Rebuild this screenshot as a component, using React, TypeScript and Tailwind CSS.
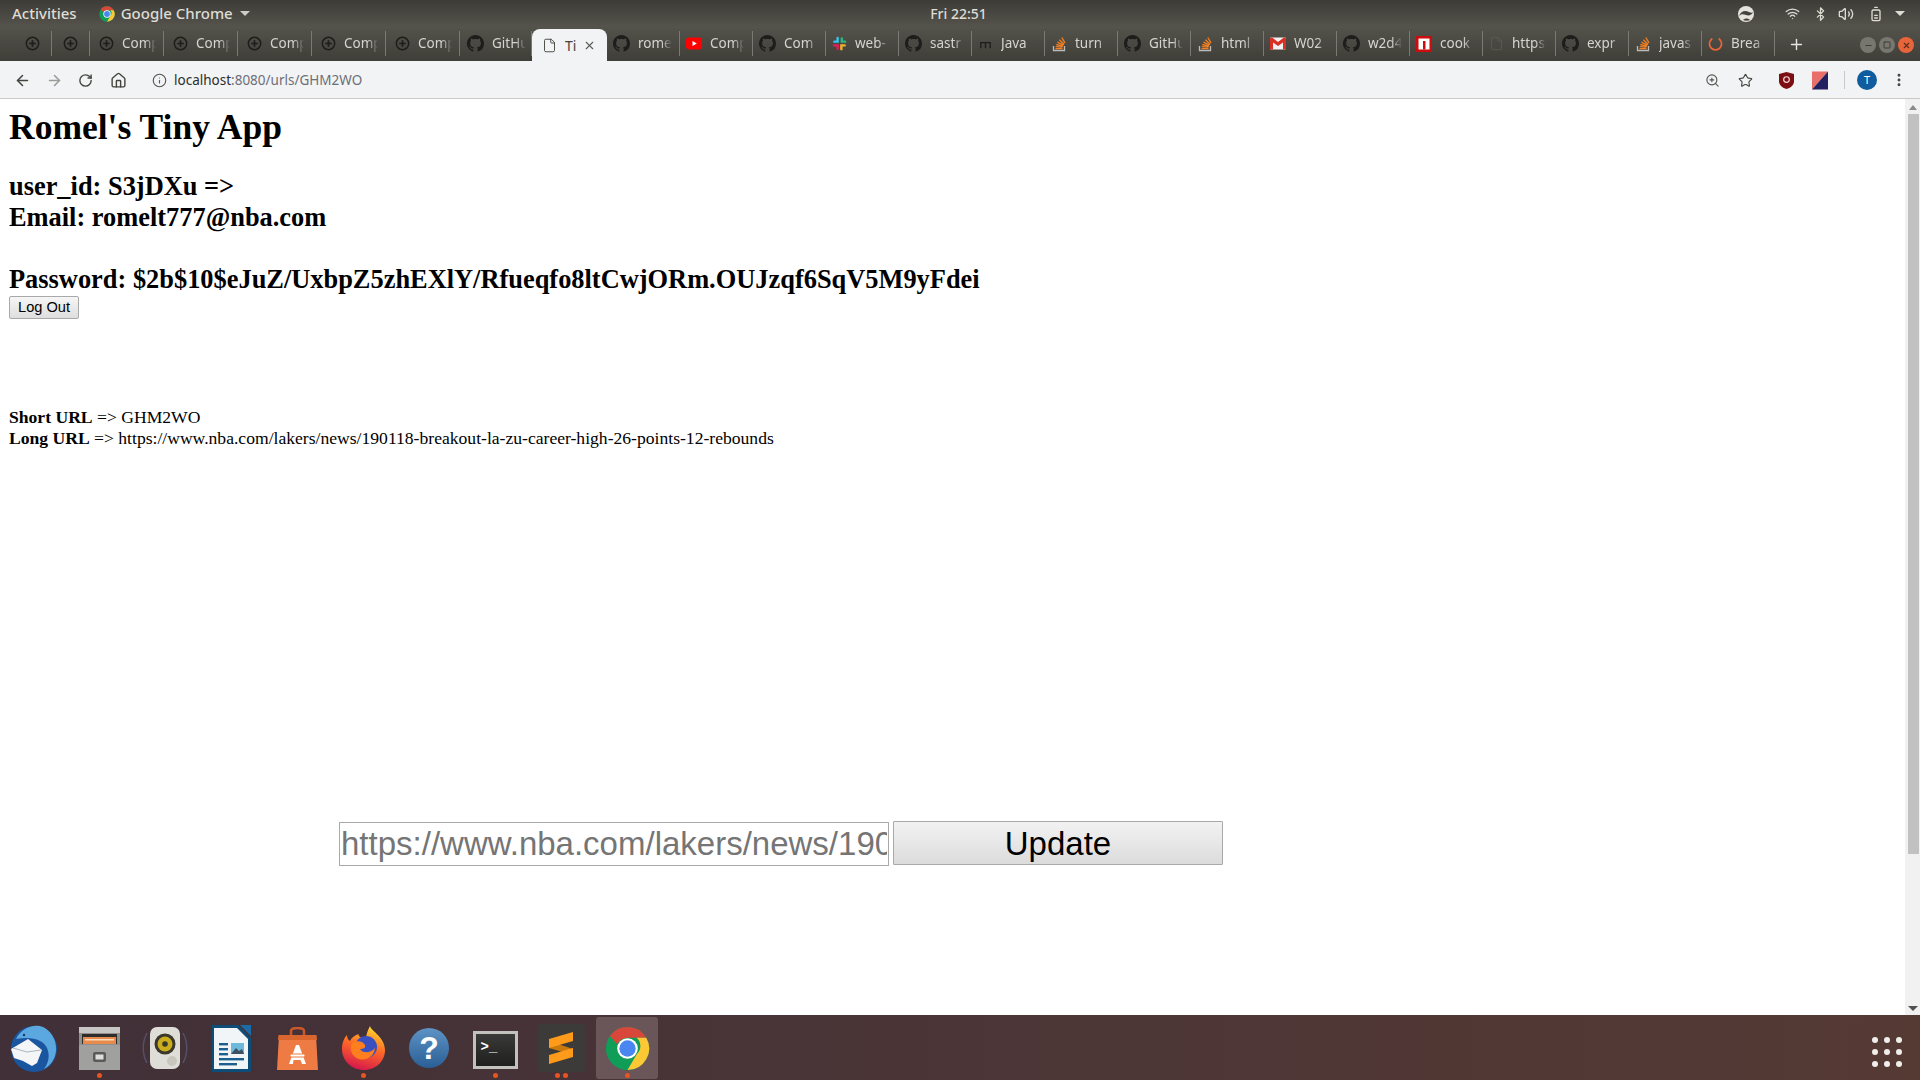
import { Plus, X, Minus, Square, ArrowLeft, ArrowRight, RotateCw, Home, Info, ZoomIn, Star, MoreVertical, Wifi, Bluetooth, Volume2, BatteryMedium, File } from "lucide-react";

const ubuntu = "font-['Noto_Sans',sans-serif]";

function GitHubIcon() {
  return (
    <svg viewBox="0 0 16 16" className="h-[17px] w-[17px] shrink-0" fill="#1d1d1b">
      <path d="M8 0C3.58 0 0 3.58 0 8c0 3.54 2.29 6.53 5.47 7.59.4.07.55-.17.55-.38 0-.19-.01-.82-.01-1.49-2.01.37-2.53-.49-2.69-.94-.09-.23-.48-.94-.82-1.13-.28-.15-.68-.52-.01-.53.63-.01 1.08.58 1.23.82.72 1.21 1.87.87 2.33.66.07-.52.28-.87.51-1.07-1.78-.2-3.64-.89-3.64-3.95 0-.87.31-1.59.82-2.15-.08-.2-.36-1.02.08-2.12 0 0 .67-.21 2.2.82.64-.18 1.32-.27 2-.27s1.36.09 2 .27c1.53-1.04 2.2-.82 2.2-.82.44 1.1.16 1.92.08 2.12.51.56.82 1.27.82 2.15 0 3.07-1.87 3.75-3.65 3.95.29.25.54.73.54 1.48 0 1.07-.01 1.93-.01 2.2 0 .21.15.46.55.38A8.01 8.01 0 0 0 16 8c0-4.42-3.58-8-8-8z" />
    </svg>
  );
}

function PlusCircleIcon() {
  return (
    <svg viewBox="0 0 16 16" className="h-[15px] w-[15px] shrink-0" fill="none" stroke="#1d1d1b" strokeWidth="1.6">
      <circle cx="8" cy="8" r="6.6" />
      <path d="M8 4.5v7M4.5 8h7" strokeWidth="1.8" />
    </svg>
  );
}

function StackIcon() {
  return (
    <svg viewBox="0 0 16 16" className="h-[16px] w-[16px] shrink-0" fill="none">
      <path d="M2.5 10v4.5h11V10" stroke="#bcbbbb" strokeWidth="1.3" />
      <path d="M4.5 12.7h7M4.7 10.6l6.8.6M5.3 8.5l6.6 1.7M6.5 6.2l6 3M8.4 3.8l4.8 4.4M10.8 1.5l3.2 5.4" stroke="#f48024" strokeWidth="1.3" />
    </svg>
  );
}

function YouTubeIcon() {
  return (
    <svg viewBox="0 0 16 12" className="h-[13px] w-[16px] shrink-0">
      <rect width="16" height="12" rx="3" fill="#ff0000" />
      <path d="M6.5 3.5 10.8 6l-4.3 2.5z" fill="#fff" />
    </svg>
  );
}

function SlackIcon() {
  return (
    <svg viewBox="0 0 16 16" className="h-[15px] w-[15px] shrink-0" fill="none" strokeWidth="2.6" strokeLinecap="round">
      <path d="M6 2v4H2.5" stroke="#36c5f0" />
      <path d="M14 6h-3.5V2.5" stroke="#2eb67d" />
      <path d="M10 14v-4h3.5" stroke="#ecb22e" />
      <path d="M2 10h4v3.5" stroke="#e01e5a" />
    </svg>
  );
}

function MediumIcon() {
  return (
    <svg viewBox="0 0 16 16" className="h-[15px] w-[15px] shrink-0" fill="none" stroke="#1d1d1b" strokeWidth="1.4">
      <path d="M3 13V7h10v6M8 7v6" />
    </svg>
  );
}

function GmailIcon() {
  return (
    <svg viewBox="0 0 16 12" className="h-[13px] w-[16px] shrink-0">
      <rect width="16" height="12" rx="1" fill="#f2f2f2" />
      <path d="M0 1.5V12h3V5l5 3.6L13 5v7h3V1.5C16 .2 14.6-.4 13.6.3L8 4.4 2.4.3C1.4-.4 0 .2 0 1.5z" fill="#d93025" />
    </svg>
  );
}

function NpmIcon() {
  return (
    <svg viewBox="0 0 16 16" className="h-[16px] w-[16px] shrink-0">
      <rect width="16" height="16" fill="#cb0d0d" />
      <rect x="2.5" y="2.5" width="11" height="11" fill="#fff" />
      <rect x="7" y="5" width="2.5" height="8.5" fill="#cb0d0d" />
    </svg>
  );
}

function SpinnerIcon() {
  return (
    <svg viewBox="0 0 16 16" className="h-[15px] w-[15px] shrink-0" fill="none" stroke="#e8683a" strokeWidth="1.8" strokeLinecap="round">
      <path d="M4 3.2a6.5 6.5 0 1 0 8 0" />
    </svg>
  );
}

function BlankPageIcon() {
  return <File className="h-[15px] w-[15px] shrink-0 text-[#5e5d58]" strokeWidth={1.3} />;
}

const tabs = [
  { width: "w-[38px]", pad: "pl-[11px]", icon: <PlusCircleIcon />, label: "" },
  { width: "w-[38px]", pad: "pl-[11px]", icon: <PlusCircleIcon />, label: "" },
  { width: "w-[74px]", pad: "pl-[9px]", icon: <PlusCircleIcon />, label: "Comp" },
  { width: "w-[74px]", pad: "pl-[9px]", icon: <PlusCircleIcon />, label: "Comp" },
  { width: "w-[74px]", pad: "pl-[9px]", icon: <PlusCircleIcon />, label: "Comp" },
  { width: "w-[74px]", pad: "pl-[9px]", icon: <PlusCircleIcon />, label: "Comp" },
  { width: "w-[74px]", pad: "pl-[9px]", icon: <PlusCircleIcon />, label: "Comp" },
  { width: "w-[72px]", pad: "pl-[7px]", icon: <GitHubIcon />, label: "GitHu" },
];

const tabsAfter = [
  { icon: <GitHubIcon />, label: "rome" },
  { icon: <YouTubeIcon />, label: "Comp" },
  { icon: <GitHubIcon />, label: "Com" },
  { icon: <SlackIcon />, label: "web-" },
  { icon: <GitHubIcon />, label: "sastr" },
  { icon: <MediumIcon />, label: "Java" },
  { icon: <StackIcon />, label: "turn" },
  { icon: <GitHubIcon />, label: "GitHu" },
  { icon: <StackIcon />, label: "html" },
  { icon: <GmailIcon />, label: "W02" },
  { icon: <GitHubIcon />, label: "w2d4" },
  { icon: <NpmIcon />, label: "cook" },
  { icon: <BlankPageIcon />, label: "https" },
  { icon: <GitHubIcon />, label: "expr" },
  { icon: <StackIcon />, label: "javas" },
  { icon: <SpinnerIcon />, label: "Brea" },
];

function ChromeLogo({ size }: { size: string }) {
  return (
    <svg viewBox="0 0 48 48" className={size}>
      <circle cx="24" cy="24" r="23" fill="#0f9d58" />
      <path d="M24 1a23 23 0 0 1 20 11.5H24a11.5 11.5 0 0 0-10.6 7.2L5.2 10.7A23 23 0 0 1 24 1z" fill="#d9463a" />
      <path d="M44 12.5A23 23 0 0 1 24 47l10-17.2a11.5 11.5 0 0 0-.3-17.3z" fill="#fcc934" />
      <circle cx="24" cy="24" r="11" fill="#fff" />
      <circle cx="24" cy="24" r="8.7" fill="#4a86f0" />
    </svg>
  );
}

function TabItem({ width, pad = "pl-[6px]", icon, label }: { width: string; pad?: string; icon: React.ReactNode; label: string }) {
  return (
    <div className={`flex h-[25px] ${width} ${pad} items-center gap-[8px] overflow-hidden border-r border-[#7a7973]`}>
      {icon}
      {label && (
        <span className="w-[36px] overflow-hidden whitespace-nowrap text-[13.5px] text-[#d5d4ce] [mask-image:linear-gradient(to_right,black_65%,transparent_95%)]">
          {label}
        </span>
      )}
    </div>
  );
}

function DockItem({ children, dots = 0, active = false }: { children: React.ReactNode; dots?: number; active?: boolean }) {
  return (
    <div className="relative flex h-[62px] w-[66px] items-center justify-center">
      {active && <span className="absolute inset-y-0 left-[2px] right-[2px] rounded-[3px] bg-[#6a5558]" />}
      <div className="relative flex items-center justify-center">{children}</div>
      {dots > 0 && (
        <div className="absolute bottom-[1px] left-0 right-0 flex justify-center gap-[3px]">
          {Array.from({ length: dots }).map((_, i) => (
            <span key={i} className="h-[5px] w-[5px] rounded-full bg-[#e9541f]" />
          ))}
        </div>
      )}
    </div>
  );
}

function Dock() {
  return (
    <div className="flex h-[65px] items-end bg-gradient-to-r from-[#413038] to-[#553a34] pb-[1px]">
      {/* Thunderbird */}
      <DockItem>
        <svg viewBox="0 0 48 48" className="h-[48px] w-[48px]">
          <circle cx="25" cy="25" r="23" fill="#1a55a0" />
          <path d="M7 15C12 4 25-1 34 3c8 4 14 13 13 24-1 9-6 15-12 18 5-7 6-14 3-21-4-8-14-12-31-9z" fill="#5ba7df" />
          <circle cx="15" cy="11" r="1.2" fill="#123a6e" />
          <path d="M2 25 19 15l14 11-5 13-5 3-9-5-9-3z" fill="#f3f5f6" />
          <path d="M4 24l14 4 14-2" fill="none" stroke="#a9b6c1" strokeWidth="1" />
        </svg>
      </DockItem>
      {/* Files */}
      <DockItem dots={1}>
        <svg viewBox="0 0 41 43" className="h-[43px] w-[41px]">
          <rect width="41" height="43" rx="2" fill="#8f8f8d" />
          <rect width="41" height="6" fill="#c7c6c4" />
          <rect x="3" y="7" width="35" height="10" fill="#2f2d2b" />
          <rect x="4" y="10" width="33" height="7" fill="#e78b4c" />
          <rect x="6" y="12" width="29" height="1.5" fill="#f9dcbd" />
          <rect y="18" width="41" height="25" fill="#a0a09e" />
          <rect x="14" y="25" width="13" height="10" rx="2" fill="#5a5a58" />
          <rect x="16.5" y="27.5" width="8" height="5" fill="#dedede" />
        </svg>
      </DockItem>
      {/* Rhythmbox */}
      <DockItem>
        <svg viewBox="0 0 48 42" className="h-[42px] w-[48px]">
          <path d="M6 6C1 15 1 27 6 36M42 6c5 9 5 21 0 30" fill="none" stroke="#55506a" strokeWidth="1.5" />
          <rect x="9" y="0" width="30" height="42" rx="7" fill="#dfddd7" />
          <circle cx="24" cy="17" r="10.5" fill="#3a372c" />
          <circle cx="24" cy="17" r="7.5" fill="#c9ad1d" />
          <circle cx="24" cy="17" r="2.8" fill="#3a372c" />
          <circle cx="31" cy="34" r="5" fill="#c8c6bf" />
        </svg>
      </DockItem>
      {/* LibreOffice Writer */}
      <DockItem>
        <svg viewBox="0 0 40 47" className="h-[47px] w-[40px]">
          <path d="M1 0h26l13 13v32a2 2 0 0 1-2 2H1z" fill="#0d4d78" />
          <path d="M3 3h23l11 11v30H3z" fill="#f1f5f7" />
          <path d="M29 0h11v11z" fill="#1a6ca8" />
          <rect x="8" y="18" width="9" height="2.4" fill="#1a5f8f" />
          <rect x="8" y="23" width="9" height="2.4" fill="#1a5f8f" />
          <rect x="8" y="28" width="9" height="2.4" fill="#1a5f8f" />
          <rect x="20" y="18" width="13" height="11" fill="#6db9dc" />
          <path d="m20 29 5-6 3 3 3-2 2 5z" fill="#3f5060" />
          <rect x="8" y="33" width="25" height="2.4" fill="#1a5f8f" />
          <rect x="8" y="38" width="18" height="2.4" fill="#1a5f8f" />
        </svg>
      </DockItem>
      {/* Ubuntu Software */}
      <DockItem>
        <svg viewBox="0 0 41 43" className="h-[43px] w-[41px]">
          <path d="M14 11V4c0-4 13-4 13 0v7" fill="none" stroke="#c9592a" strokeWidth="2.5" />
          <path d="M2 8h37l2 35H0z" fill="#ee7b43" />
          <path d="M1.5 8h38l.5 5H1z" fill="#d9652f" />
          <path d="M12 37 19 18h3l7 19h-4l-1.5-4h-7L16 37z" fill="#fff" />
          <rect x="13" y="27" width="15" height="3" rx="1.5" fill="#fff" stroke="#ee7b43" />
        </svg>
      </DockItem>
      {/* Firefox */}
      <DockItem dots={1}>
        <svg viewBox="0 0 43 44" className="h-[44px] w-[43px]">
          <defs>
            <linearGradient id="ffx" x1="0.6" y1="0" x2="0.3" y2="1">
              <stop offset="0" stopColor="#ffd42f" />
              <stop offset="0.45" stopColor="#ff6a25" />
              <stop offset="1" stopColor="#d3134f" />
            </linearGradient>
          </defs>
          <path d="M28 0c1 5 15 11 15 24 0 11-9 20-21 20C10 44 0 35 0 23 0 17 2 12 5 9c0 3 1 5 3 6 2-4 5-6 9-7-2 2 3 4 7 5 0-5 2-9 4-13z" fill="url(#ffx)" />
          <circle cx="24" cy="21" r="11" fill="#3a4fc0" />
          <path d="M10 17c5-3 11-2 13 2 1 3-2 4-5 4 2 4 10 5 15-1-1 9-9 13-16 11-7-2-10-10-7-16z" fill="#ff7f1e" />
        </svg>
      </DockItem>
      {/* Help */}
      <DockItem>
        <div className="flex h-[40px] w-[40px] items-center justify-center rounded-full bg-gradient-to-b from-[#5e93c5] to-[#2a5f96] font-['Liberation_Sans',sans-serif] text-[32px] font-bold leading-none text-white">
          ?
        </div>
      </DockItem>
      {/* Terminal */}
      <DockItem dots={1}>
        <div className="mt-[3px] h-[38px] w-[45px] border-[3px] border-[#c2c1bc] bg-gradient-to-b from-[#3a3a38] to-[#1f1f1e] pl-[5px] pt-[6px] font-['Liberation_Mono',monospace] text-[14px] font-bold leading-none text-white">
          &gt;_
        </div>
      </DockItem>
      {/* Sublime */}
      <DockItem dots={2}>
        <div className="flex h-[48px] w-[48px] items-center justify-center rounded-[4px] bg-[#3c3b39]">
          <svg viewBox="0 0 24 32" className="h-[32px] w-[24px]">
            <path d="M0 9l24 8v6L0 16z" fill="#c97a0c" />
            <path d="M24 0v9L0 16V7z" fill="#ff9a1a" />
            <path d="M24 16v9L0 32v-9z" fill="#ff9a1a" />
          </svg>
        </div>
      </DockItem>
      {/* Chrome, running */}
      <DockItem dots={1} active>
        <ChromeLogo size="h-[45px] w-[45px]" />
      </DockItem>
      <div className="mb-[12px] ml-auto mr-[18px] grid grid-cols-3 gap-[6px]">
        {[0, 1, 2, 3, 4, 5, 6, 7, 8].map((i) => (
          <span key={i} className="h-[6px] w-[6px] rounded-full bg-[#f0efec]" />
        ))}
      </div>
    </div>
  );
}

export default function App() {
  return (
    <div className="flex h-screen w-full flex-col overflow-hidden bg-white">
      {/* GNOME TOP BAR */}
      <div className={`flex h-[27px] items-center justify-between bg-gradient-to-b from-[#3d3c37] to-[#55534c] pl-[12px] pr-[15px] text-[15px] font-medium text-[#dfdcd4] ${ubuntu}`}>
        <div className="flex flex-1 items-center">
          <span>Activities</span>
          <span className="ml-[22px] mr-[6px]">
            <ChromeLogo size="h-[16px] w-[16px]" />
          </span>
          <span>Google Chrome</span>
          <span className="ml-[7px] h-0 w-0 border-x-[5px] border-t-[5px] border-x-transparent border-t-[#cfccc4]" />
        </div>
        <span className="text-[14px]">Fri 22:51</span>
        <div className="flex flex-1 items-center justify-end">
          <svg viewBox="0 0 16 16" className="mr-[31px] h-[16px] w-[16px]" fill="#e6e3dc">
            <circle cx="8" cy="8" r="8" />
            <path d="M1 10C3 5 7 4 11 6c2 1 3 1 4 0-1 3-4 4-7 3-3-1-5-1-7 1z" fill="#44433e" />
            <path d="M5 14c2-2 5-2 7 0-2 1-5 1-7 0z" fill="#44433e" />
          </svg>
          <Wifi className="mr-[13px] h-[15px] w-[15px]" />
          <Bluetooth className="mr-[10px] h-[16px] w-[15px]" />
          <Volume2 className="mr-[14px] h-[16px] w-[16px]" />
          <BatteryMedium className="mr-[11px] h-[16px] w-[16px] -rotate-90" />
          <span className="h-0 w-0 border-x-[5px] border-t-[5px] border-x-transparent border-t-[#dfdcd4]" />
        </div>
      </div>

      {/* TAB STRIP */}
      <div className={`flex h-[34px] items-end bg-gradient-to-b from-[#53524b] to-[#3f3e38] pl-[14px] ${ubuntu}`}>
        <div className="mb-[5px] flex items-center">
          {tabs.map((tab, i) => (
            <TabItem key={i} {...tab} />
          ))}
        </div>
        <div className="flex h-[32px] w-[75px] items-center rounded-t-[8px] bg-[#f2f3f5] pl-[10px] text-[14px] text-[#45443f]">
          <File className="h-[15px] w-[15px] shrink-0" strokeWidth={1.5} />
          <span className="ml-[8px]">Ti</span>
          <X className="ml-[7px] h-[13px] w-[13px] text-[#5b5a55]" strokeWidth={2} />
        </div>
        <div className="mb-[5px] flex items-center">
          {tabsAfter.map((tab, i) => (
            <TabItem key={i} width="w-[73px]" icon={tab.icon} label={tab.label} />
          ))}
        </div>
        <Plus className="mb-[8px] ml-[13px] h-[17px] w-[17px] text-[#e6e5e0]" strokeWidth={2} />
        <div className="mb-[8px] ml-auto mr-[6px] flex items-center gap-[3px]">
          <span className="flex h-[16px] w-[16px] items-center justify-center rounded-full bg-[#77766f]">
            <Minus className="h-[9px] w-[9px] text-[#3f3e38]" strokeWidth={3} />
          </span>
          <span className="flex h-[16px] w-[16px] items-center justify-center rounded-full bg-[#77766f]">
            <Square className="h-[8px] w-[8px] text-[#3f3e38]" strokeWidth={3} />
          </span>
          <span className="flex h-[16px] w-[16px] items-center justify-center rounded-full bg-[#e8643a]">
            <X className="h-[9px] w-[9px] text-[#56301f]" strokeWidth={3} />
          </span>
        </div>
      </div>

      {/* TOOLBAR */}
      <div className={`flex h-[38px] items-center border-b border-[#c9c9c9] bg-[#f2f3f5] pl-[14px] pr-[13px] pt-[1px] ${ubuntu}`}>
        <ArrowLeft className="h-[17px] w-[17px] text-[#45443f]" strokeWidth={2.2} />
        <ArrowRight className="ml-[15px] h-[17px] w-[17px] text-[#9b9b98]" strokeWidth={2.2} />
        <RotateCw className="ml-[15px] h-[15px] w-[15px] text-[#45443f]" strokeWidth={2.2} />
        <Home className="ml-[17px] h-[17px] w-[17px] text-[#45443f]" strokeWidth={2} />
        <div className="ml-[15px] flex h-[30px] flex-1 items-center rounded-full bg-[#f2f3f5] pl-[10px] pr-[5px]">
          <Info className="h-[15px] w-[15px] text-[#55544f]" strokeWidth={1.8} />
          <span className="ml-[7px] text-[13.5px] text-[#2e2d2a]">
            localhost<span className="text-[#6c6f78]">:8080/urls/GHM2WO</span>
          </span>
          <ZoomIn className="ml-auto h-[15px] w-[15px] text-[#55544f]" strokeWidth={1.8} />
          <Star className="ml-[18px] mr-[8px] h-[15px] w-[15px] text-[#45443f]" strokeWidth={1.8} />
        </div>
        {/* extensions */}
        <svg viewBox="0 0 16 18" className="ml-[13px] h-[17px] w-[15px]">
          <path d="M8 0 16 2v8c0 4-4 7-8 8-4-1-8-4-8-8V2z" fill="#7d0f12" />
          <circle cx="8" cy="8" r="3" fill="none" stroke="#f3d9d9" strokeWidth="1.3" />
        </svg>
        <svg viewBox="0 0 16 18" className="ml-[18px] h-[19px] w-[16px]">
          <path d="M0 0h16L0 18z" fill="#e96f6a" />
          <path d="M16 0v18H0z" fill="#22205f" />
        </svg>
        <span className="ml-[16px] h-[18px] w-px bg-[#c9c9c9]" />
        <span className="ml-[12px] flex h-[20px] w-[20px] items-center justify-center rounded-full bg-[#0f5c9e] text-[11px] text-white">T</span>
        <MoreVertical className="ml-[14px] h-[16px] w-[16px] text-[#45443f]" strokeWidth={2.4} />
      </div>

      {/* PAGE + SCROLLBAR */}
      <div className="flex min-h-0 flex-1">
        <main className="flex-1 pl-[9px] font-['Liberation_Serif',serif] text-black">
          <h1 className="mt-[8px] text-[35.5px] font-bold leading-[40px]">Romel's Tiny App</h1>
          <h2 className="mt-[24px] text-[26.4px] font-bold leading-[31px]">
            user_id: S3jDXu =&gt;
            <br />
            Email: romelt777@nba.com
            <br />
            <br />
            Password: $2b$10$eJuZ/UxbpZ5zhEXlY/Rfueqfo8ltCwjORm.OUJzqf6SqV5M9yFdei
          </h2>
          <button className="mt-[1px] block h-[23px] w-[70px] rounded-[2px] border border-[#a9a9a9] bg-gradient-to-b from-[#f6f6f6] to-[#dedede] font-['Liberation_Sans',sans-serif] text-[14.6px] leading-none text-black">
            Log Out
          </button>
          <p className="mt-[88px] text-[17.6px] leading-[21px]">
            <b>Short URL</b> =&gt; GHM2WO
            <br />
            <b>Long URL</b> =&gt; https://www.nba.com/lakers/news/190118-breakout-la-zu-career-high-26-points-12-rebounds
          </p>
          <form className="ml-[330px] mt-[372px] flex items-start gap-[4px]" onSubmit={(e) => e.preventDefault()}>
            <input
              readOnly
              defaultValue=""
              placeholder="https://www.nba.com/lakers/news/190118-breakout-la-zu-career-high-26-points-12-rebounds"
              className="mt-[1px] h-[44px] w-[550px] border border-[#a9a9a9] bg-white px-[1px] font-['Liberation_Sans',sans-serif] text-[33px] text-[#757575] placeholder:text-[#757575]"
            />
            <button className="h-[44px] w-[330px] rounded-[1px] border border-[#a9a9a9] bg-gradient-to-b from-[#f2f2f2] to-[#dcdcdc] font-['Liberation_Sans',sans-serif] text-[33px] leading-none text-black">
              Update
            </button>
          </form>
        </main>
        <div className="flex w-[15px] flex-col items-center bg-[#f1f1f1]">
          <span className="mt-[6px] h-0 w-0 border-x-[4px] border-b-[5px] border-x-transparent border-b-[#8a8a8a]" />
          <span className="ml-[1px] mt-[4px] h-[740px] w-[11px] bg-[#c1c1c1]" />
          <span className="mb-[4px] mt-auto h-0 w-0 border-x-[5px] border-t-[5px] border-x-transparent border-t-[#505050]" />
        </div>
      </div>

      <Dock />
    </div>
  );
}
